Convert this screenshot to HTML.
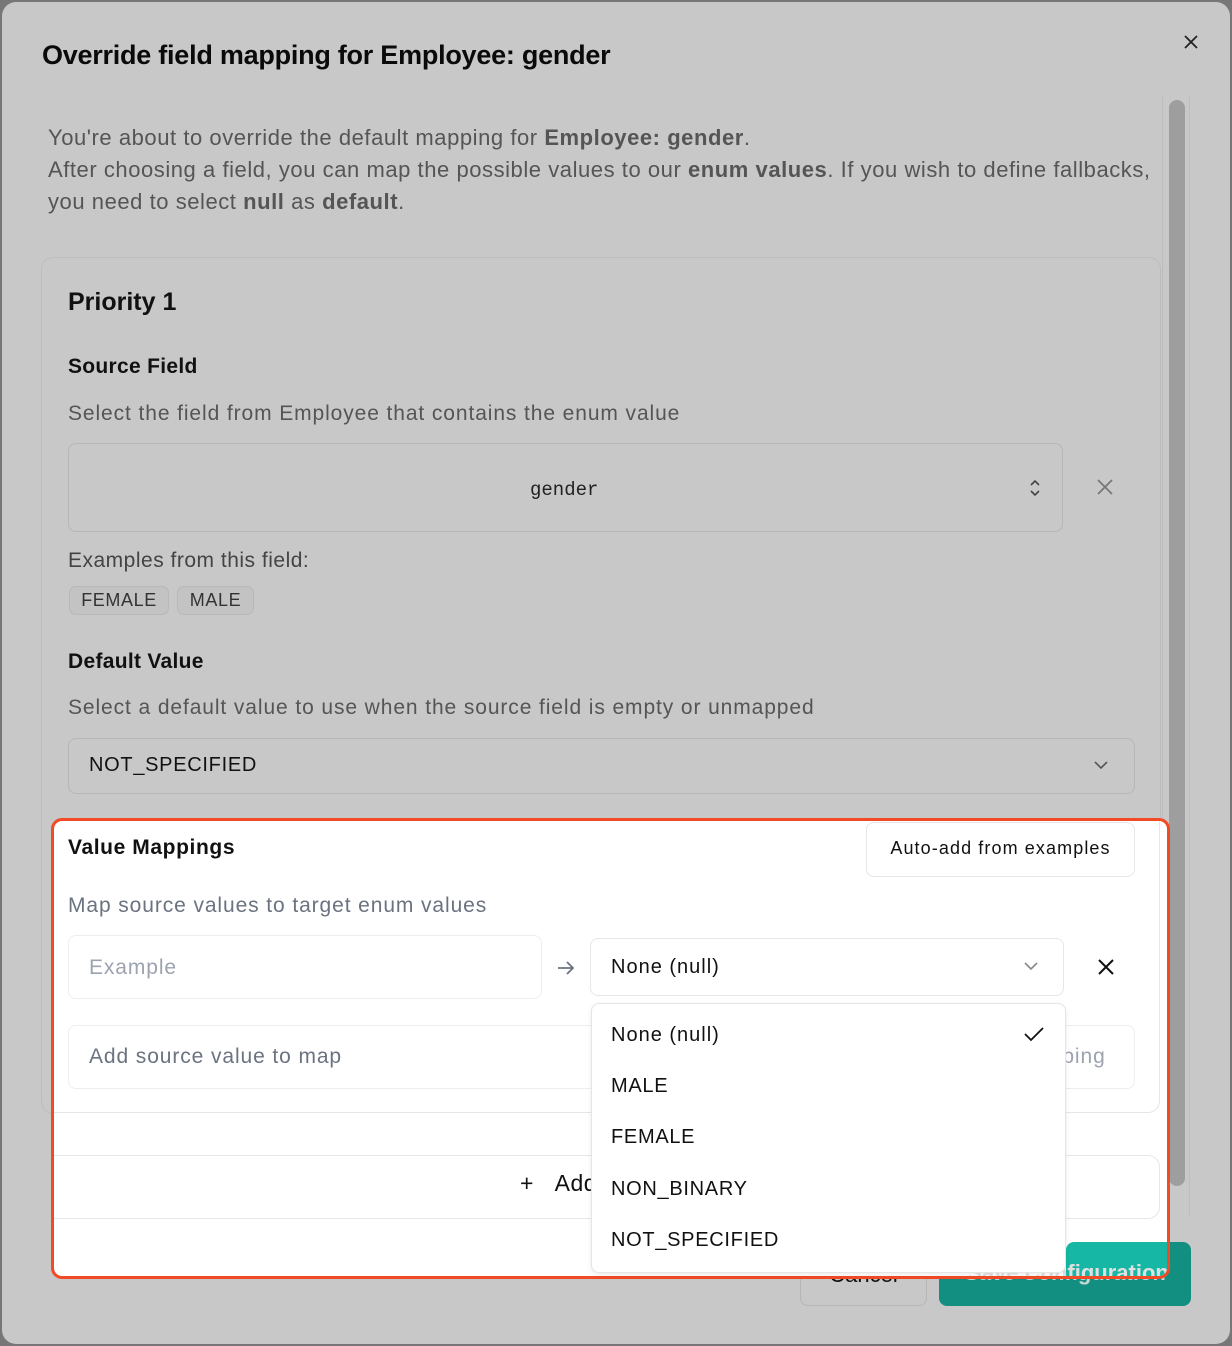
<!DOCTYPE html>
<html><head><meta charset="utf-8"><style>
*{box-sizing:border-box;margin:0;padding:0}
body{width:1232px;height:1346px;background:#777;position:relative;overflow:hidden;font-family:"Liberation Sans",sans-serif}
.a{position:absolute;white-space:nowrap}
.modal{position:absolute;left:2px;top:2px;width:1228px;height:1342px;background:#c8c8c8;border-radius:14px}
.t20{font-size:20px;line-height:24px;letter-spacing:0.7px}
.g{font-size:21px;line-height:24px;letter-spacing:0.9px}
.gray{color:#555}
.box{position:absolute;border:1px solid #b6b6b6;border-radius:8px}
.wb{position:absolute;border:1px solid #e6e6e6;border-radius:8px;background:#fff}
.h{font-weight:bold;color:#111;font-size:21px;line-height:24px;letter-spacing:0.3px}
</style></head><body>
<div class="modal"></div>
<div class="a" style="left:42px;top:40px;font-size:27px;font-weight:bold;letter-spacing:-0.25px;color:#0a0a0a">Override field mapping for Employee: gender</div>
<svg class="a" style="left:1183px;top:34px" width="16" height="16" viewBox="0 0 16 16"><path d="M2 2L14 14M14 2L2 14" stroke="#222" stroke-width="1.8"/></svg>
<div class="a" style="left:48px;top:122px;font-size:22px;line-height:32px;color:#555;letter-spacing:0.55px">You're about to override the default mapping for <b>Employee: gender</b>.<br>After choosing a field, you can map the possible values to our <b>enum values</b>. If you wish to define fallbacks,<br>you need to select <b>null</b> as <b>default</b>.</div>
<!-- scrollbar -->
<div class="a" style="left:1162px;top:96px;width:28px;height:1121px;border-left:1px solid #bdbdbd;border-right:1px solid #bdbdbd"></div>
<div class="a" style="left:1169px;top:100px;width:16px;height:1086px;background:#9e9e9e;border-radius:8px"></div>
<!-- card -->
<div class="box" style="left:41px;top:257px;width:1120px;height:857px;border-radius:12px;border-color:#bdbdbd"></div>
<div class="a" style="left:68px;top:288px;font-size:25px;font-weight:bold;color:#111">Priority 1</div>
<div class="a h" style="left:68px;top:355px">Source Field</div>
<div class="a g gray" style="left:68px;top:402px">Select the field from Employee that contains the enum value</div>
<div class="box" style="left:68px;top:443px;width:995px;height:89px"></div>
<div class="a" style="left:530px;top:479px;font-family:'Liberation Mono',monospace;font-size:19px;color:#222">gender</div>
<svg class="a" style="left:1028px;top:478px" width="14" height="20" viewBox="0 0 14 20"><path d="M3 7L7 3L11 7M3 13L7 17L11 13" stroke="#444" stroke-width="1.6" fill="none"/></svg>
<svg class="a" style="left:1096px;top:478px" width="18" height="18" viewBox="0 0 18 18"><path d="M2 2L16 16M16 2L2 16" stroke="#777" stroke-width="1.8"/></svg>
<div class="a g" style="left:68px;top:549px;color:#444;letter-spacing:0.5px">Examples from this field:</div>
<div class="a" style="left:69px;top:586px;width:100px;height:29px;border:1px solid #b8b8b8;border-radius:7px;background:#c3c3c3;font-size:18px;line-height:27px;text-align:center;color:#333;letter-spacing:0.6px">FEMALE</div>
<div class="a" style="left:177px;top:586px;width:77px;height:29px;border:1px solid #b8b8b8;border-radius:7px;background:#c3c3c3;font-size:18px;line-height:27px;text-align:center;color:#333;letter-spacing:0.6px">MALE</div>
<div class="a h" style="left:68px;top:650px">Default Value</div>
<div class="a g gray" style="left:68px;top:696px">Select a default value to use when the source field is empty or unmapped</div>
<div class="box" style="left:68px;top:738px;width:1067px;height:56px"></div>
<div class="a t20" style="left:89px;top:753px;color:#111">NOT_SPECIFIED</div>
<svg class="a" style="left:1093px;top:758px" width="16" height="14" viewBox="0 0 16 14"><path d="M2 4L8 10L14 4" stroke="#555" stroke-width="1.6" fill="none"/></svg>
<!-- footer buttons -->
<div class="box" style="left:800px;top:1240px;width:127px;height:66px;border-radius:8px"></div>
<div class="a" style="left:800px;top:1262px;width:127px;text-align:center;font-size:22px;color:#111">Cancel</div>
<div class="a" style="left:939px;top:1242px;width:252px;height:64px;background:#128f80;border-radius:8px"></div>
<div class="a" style="left:939px;top:1260px;width:252px;text-align:center;font-size:22px;font-weight:bold;color:#c8d8d4">Save Configuration</div>
<!-- highlighted region -->
<div class="a" style="left:51px;top:818px;width:1119px;height:461px;background:#fff;border:3px solid #f24a25;border-radius:11px;overflow:hidden">
  <div class="a" style="left:-14px;top:-3px;width:1120px;height:295px;border:1px solid #e6e6e6;border-top:none;border-radius:0 0 12px 12px"></div>
  <div class="a" style="left:-14px;top:334px;width:1120px;height:64px;border:1px solid #e6e6e6;border-radius:12px"></div>
  <div class="a" style="left:466px;top:349px;font-size:23px;color:#111;letter-spacing:0.5px">+&nbsp;&nbsp;&nbsp;Add Priority</div>
  <div class="a" style="left:1012px;top:421px;width:130px;height:64px;background:#16b8a5;border-radius:8px"></div>
  <div class="a" style="left:888px;top:439px;width:252px;text-align:center;font-size:22px;font-weight:bold;color:#e0e0e0">Save Configuration</div>
</div>
<div class="a h" style="left:68px;top:836px;letter-spacing:0.6px">Value Mappings</div>
<div class="wb" style="left:866px;top:822px;width:269px;height:55px"></div>
<div class="a" style="left:866px;top:838px;width:269px;text-align:center;font-size:18px;color:#111;letter-spacing:1.1px">Auto-add from examples</div>
<div class="a g" style="left:68px;top:894px;color:#6b7280">Map source values to target enum values</div>
<div class="wb" style="left:68px;top:935px;width:474px;height:64px;border-color:#eee"></div>
<div class="a g" style="left:89px;top:956px;color:#9ca3af">Example</div>
<svg class="a" style="left:556px;top:959px" width="20" height="18" viewBox="0 0 20 18"><path d="M2 9H17M11 3L17 9L11 15" stroke="#6b7280" stroke-width="1.8" fill="none"/></svg>
<div class="wb" style="left:590px;top:938px;width:474px;height:58px"></div>
<div class="a t20" style="left:611px;top:955px;color:#111;letter-spacing:1px">None (null)</div>
<svg class="a" style="left:1023px;top:960px" width="16" height="12" viewBox="0 0 16 12"><path d="M2 3L8 9L14 3" stroke="#888" stroke-width="1.6" fill="none"/></svg>
<svg class="a" style="left:1097px;top:958px" width="18" height="18" viewBox="0 0 18 18"><path d="M2 2L16 16M16 2L2 16" stroke="#111" stroke-width="2"/></svg>
<div class="wb" style="left:68px;top:1025px;width:1067px;height:64px;border-color:#eee"></div>
<div class="a g" style="left:89px;top:1045px;color:#6b7280">Add source value to map</div>
<div class="wb" style="left:960px;top:1025px;width:175px;height:64px;border-color:#eee"></div>
<div class="a g" style="left:972px;top:1045px;color:#9ca3af">Add Mapping</div>
<!-- dropdown -->
<div class="a" style="left:591px;top:1003px;width:475px;height:270px;background:#fff;border:1px solid #e5e5e5;border-radius:8px;box-shadow:0 2px 6px rgba(0,0,0,0.08)"></div>
<div class="a t20" style="left:611px;top:1023px;color:#111;letter-spacing:1px">None (null)</div>
<svg class="a" style="left:1023px;top:1025px" width="22" height="18" viewBox="0 0 22 18"><path d="M2 9L8 15L20 3" stroke="#111" stroke-width="1.8" fill="none"/></svg>
<div class="a t20" style="left:611px;top:1074px;color:#111">MALE</div>
<div class="a t20" style="left:611px;top:1125px;color:#111">FEMALE</div>
<div class="a t20" style="left:611px;top:1177px;color:#111">NON_BINARY</div>
<div class="a t20" style="left:611px;top:1228px;color:#111">NOT_SPECIFIED</div>
</body></html>
